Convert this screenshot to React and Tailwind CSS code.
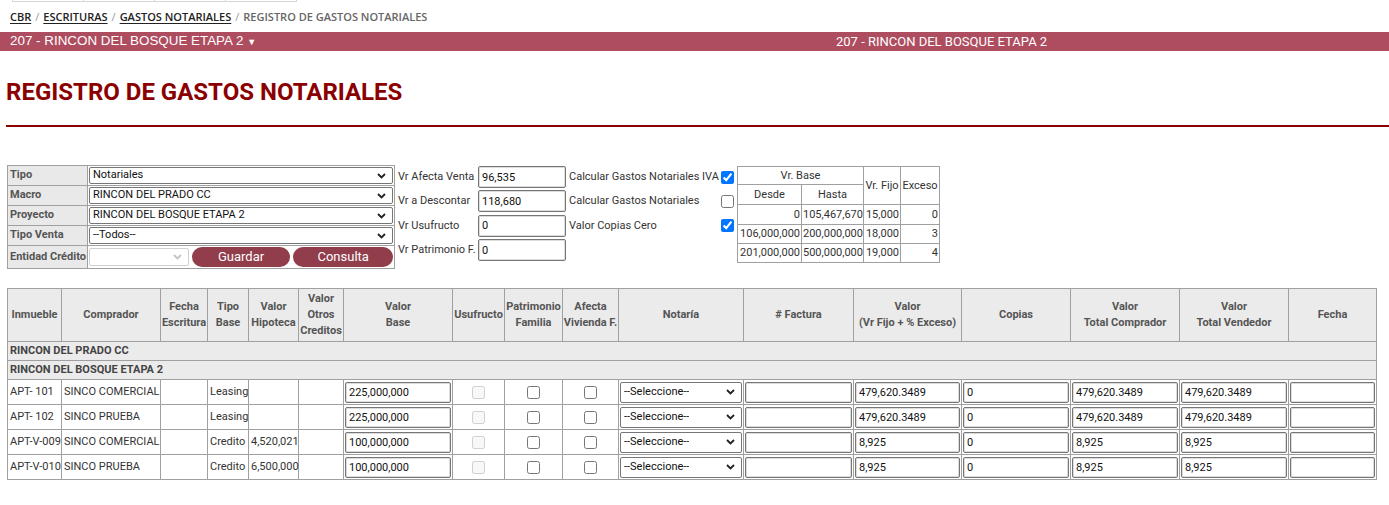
import React from "react";

const Chevron = ({ light }) => (
  <svg width="9" height="6" viewBox="0 0 9 6" className={light ? "text-[#c4c4c4]" : "text-[#222]"}>
    <path d="M1 1l3.5 3.5L8 1" fill="none" stroke="currentColor" strokeWidth="1.8" />
  </svg>
);

const Sel = ({ value, className = "", disabled }) => (
  <div
    className={
      "flex items-center justify-between rounded-[2px] border bg-white pl-[3px] pr-[6px] text-[11px] " +
      (disabled ? "border-[#d0d0d0] " : "border-[#767676] text-[#111] ") +
      className
    }
  >
    <span className="truncate">{value}</span>
    <Chevron light={disabled} />
  </div>
);

const Inp = ({ value, className = "" }) => (
  <input
    defaultValue={value}
    className={
      "rounded-[2px] border border-[#767676] bg-white px-[3px] text-[11px] text-[#111] shadow-[inset_0_0_0_1px_#dcdcdc] outline-none " +
      className
    }
  />
);

const Cb = ({ checked, disabled }) => (
  <input type="checkbox" defaultChecked={checked} disabled={disabled} className="m-0 h-[13px] w-[13px]" />
);

const formRows = [
  ["Tipo", "Notariales"],
  ["Macro", "RINCON DEL PRADO CC"],
  ["Proyecto", "RINCON DEL BOSQUE ETAPA 2"],
  ["Tipo Venta", "--Todos--"],
];

const widths = [54, 99, 47, 41, 50, 45, 109, 52, 58, 56, 125, 110, 108, 109, 109, 109, 88];

const rows = [
  { inm: "APT- 101", comp: "SINCO COMERCIAL", tipo: "Leasing", hip: "", base: "225,000,000", valor: "479,620.3489", tc: "479,620.3489", tv: "479,620.3489" },
  { inm: "APT- 102", comp: "SINCO PRUEBA", tipo: "Leasing", hip: "", base: "225,000,000", valor: "479,620.3489", tc: "479,620.3489", tv: "479,620.3489" },
  { inm: "APT-V-009", comp: "SINCO COMERCIAL", tipo: "Credito", hip: "4,520,021", base: "100,000,000", valor: "8,925", tc: "8,925", tv: "8,925" },
  { inm: "APT-V-010", comp: "SINCO PRUEBA", tipo: "Credito", hip: "6,500,000", base: "100,000,000", valor: "8,925", tc: "8,925", tv: "8,925" },
];

const th = "border border-[#a0a0a0] bg-[#ebebeb] p-0 text-center align-middle font-bold leading-[16px] text-[#555]";
const td = "border border-[#a0a0a0] px-[2px] py-0 align-middle text-[#333]";
const tdi = "border border-[#a0a0a0] px-[1px] py-0 align-middle";
const rt = "border border-[#a0a0a0] px-[1px] py-0 text-right leading-[14px] text-[#333]";
const rh = "border border-[#a0a0a0] px-[1px] py-0 text-center font-normal leading-[14px] text-[#333]";

export default function App() {
  return (
    <div className="h-[505px] w-[1389px] overflow-hidden bg-white font-['Roboto',sans-serif] text-[11px] text-[#333]">
      {/* faint top strip */}
      <div className="flex h-[3px] pl-[12px]">
        {[0, 1, 2, 3].map((i) => (
          <div key={i} className="h-[2px] w-[71px] border-b border-l border-[#d6d6d6]" />
        ))}
        <div className="h-[2px] w-px bg-[#d6d6d6]" />
      </div>

      {/* breadcrumb */}
      <div className="flex h-[29px] items-center pl-[10px] font-['Open_Sans',sans-serif] text-[11px]">
        <span className="font-semibold text-[#222] underline underline-offset-2">CBR</span>
        <span className="px-[4px] text-[#999]">/</span>
        <span className="font-semibold text-[#222] underline underline-offset-2">ESCRITURAS</span>
        <span className="px-[4px] text-[#999]">/</span>
        <span className="font-semibold text-[#222] underline underline-offset-2">GASTOS NOTARIALES</span>
        <span className="px-[4px] text-[#999]">/</span>
        <span className="font-semibold text-[#666]">REGISTRO DE GASTOS NOTARIALES</span>
      </div>

      {/* project bar */}
      <div className="flex h-[19px] items-center bg-[#ae4d60] text-white">
        <div className="w-[836px] pl-[10px] font-['Liberation_Sans',sans-serif] text-[13.4px]">
          207 - RINCON DEL BOSQUE ETAPA 2 <span className="text-[9px]">▼</span>
        </div>
        <div className="text-[13px]">207 - RINCON DEL BOSQUE ETAPA 2</div>
      </div>

      {/* title */}
      <h1 className="mt-[27px] pl-[6px] text-[24px] font-bold leading-[28px] text-[#8b0000]">
        REGISTRO DE GASTOS NOTARIALES
      </h1>
      <div className="ml-[6px] mt-[19px] h-[2px] bg-[#8b0000]" />

      {/* filters */}
      <div className="mt-[38px] flex h-[103px] items-start pl-[7px]">
        <table className="w-[388px] table-fixed border-collapse border border-[#a0a0a0]">
          <colgroup>
            <col className="w-[80px]" />
            <col />
          </colgroup>
          <tbody>
            {formRows.map(([l, v]) => (
              <tr key={l} className="h-[20px]">
                <td className="border border-[#a0a0a0] bg-[#e9e9e9] px-[2px] py-0 font-bold text-[#555]">{l}</td>
                <td className="border border-[#a0a0a0] px-[1px] py-0">
                  <Sel value={v} className="h-[17px]" />
                </td>
              </tr>
            ))}
            <tr className="h-[23px]">
              <td className="whitespace-nowrap border border-[#a0a0a0] bg-[#e9e9e9] px-[2px] py-0 font-bold text-[#555]">
                Entidad Crédito
              </td>
              <td className="border border-[#a0a0a0] px-[1px] py-0">
                <div className="flex items-center gap-[3px]">
                  <Sel value="" disabled className="h-[18px] w-[100px]" />
                  <button className="h-[20px] w-[99px] rounded-[10px] bg-[#923d4b] text-[13px] text-white">Guardar</button>
                  <button className="h-[20px] w-[100px] rounded-[10px] bg-[#923d4b] text-[13px] text-white">Consulta</button>
                </div>
              </td>
            </tr>
          </tbody>
        </table>

        <div className="ml-[3px] mt-[1px] grid grid-cols-[80px_91px_152px_16px] grid-rows-[22px_22px_22px_22px] gap-y-[2.4px] whitespace-nowrap text-[11px] text-[#333]">
          <div className="flex items-center">Vr Afecta Venta</div>
          <div><Inp value="96,535" className="h-[22px] w-[88px]" /></div>
          <div className="flex items-center">Calcular Gastos Notariales IVA</div>
          <div className="flex items-center"><Cb checked /></div>

          <div className="flex items-center">Vr a Descontar</div>
          <div><Inp value="118,680" className="h-[22px] w-[88px]" /></div>
          <div className="flex items-center">Calcular Gastos Notariales</div>
          <div className="flex items-center"><Cb /></div>

          <div className="flex items-center">Vr Usufructo</div>
          <div><Inp value="0" className="h-[22px] w-[88px]" /></div>
          <div className="flex items-center">Valor Copias Cero</div>
          <div className="flex items-center"><Cb checked /></div>

          <div className="flex items-center">Vr Patrimonio F.</div>
          <div><Inp value="0" className="h-[22px] w-[88px]" /></div>
          <div />
          <div />
        </div>

        <table className="mt-[1px] w-[202px] table-fixed border-collapse border border-[#a0a0a0] text-[11px]">
          <colgroup>
            <col className="w-[64px]" />
            <col className="w-[62px]" />
            <col className="w-[37px]" />
            <col className="w-[39px]" />
          </colgroup>
          <thead>
            <tr className="h-[18px]">
              <th colSpan={2} className={rh}>Vr. Base</th>
              <th rowSpan={2} className={rh + " whitespace-nowrap"}>Vr. Fijo</th>
              <th rowSpan={2} className={rh}>Exceso</th>
            </tr>
            <tr className="h-[20px]">
              <th className={rh}>Desde</th>
              <th className={rh}>Hasta</th>
            </tr>
          </thead>
          <tbody>
            {[
              ["0", "105,467,670", "15,000", "0"],
              ["106,000,000", "200,000,000", "18,000", "3"],
              ["201,000,000", "500,000,000", "19,000", "4"],
            ].map((r, i) => (
              <tr key={i} className={i === 0 ? "h-[20px]" : "h-[19px]"}>
                {r.map((c, j) => (
                  <td key={j} className={rt + (j === 2 ? " text-left" : "")}>{c}</td>
                ))}
              </tr>
            ))}
          </tbody>
        </table>
      </div>

      {/* main table */}
      <table className="ml-[7px] mt-[20px] w-[1369px] table-fixed border-collapse border border-[#a0a0a0] text-[11px]">
        <colgroup>
          {widths.map((w, i) => (
            <col key={i} style={{ width: w }} />
          ))}
        </colgroup>
        <thead>
          <tr className="h-[53px]">
            <th className={th}>Inmueble</th>
            <th className={th}>Comprador</th>
            <th className={th}>Fecha<br />Escritura</th>
            <th className={th}>Tipo<br />Base</th>
            <th className={th}>Valor<br />Hipoteca</th>
            <th className={th}>Valor<br />Otros<br />Creditos</th>
            <th className={th}>Valor<br />Base</th>
            <th className={th}>Usufructo</th>
            <th className={th}>Patrimonio<br />Familia</th>
            <th className={th}>Afecta<br />Vivienda F.</th>
            <th className={th}>Notaría</th>
            <th className={th}># Factura</th>
            <th className={th}>Valor<br />(Vr Fijo + % Exceso)</th>
            <th className={th}>Copias</th>
            <th className={th}>Valor<br />Total Comprador</th>
            <th className={th}>Valor<br />Total Vendedor</th>
            <th className={th}>Fecha</th>
          </tr>
        </thead>
        <tbody>
          {["RINCON DEL PRADO CC", "RINCON DEL BOSQUE ETAPA 2"].map((g) => (
            <tr key={g} className="h-[19px]">
              <td colSpan={17} className="border border-[#a0a0a0] bg-[#ebebeb] px-[2px] py-0 font-bold text-[#444]">
                {g}
              </td>
            </tr>
          ))}
          {rows.map((r) => (
            <tr key={r.inm} className="h-[25px]">
              <td className={td + " whitespace-nowrap"}>{r.inm}</td>
              <td className={td + " whitespace-nowrap"}>{r.comp}</td>
              <td className={td}></td>
              <td className={td}>{r.tipo}</td>
              <td className={td}>{r.hip}</td>
              <td className={td}></td>
              <td className={tdi}><Inp value={r.base} className="h-[21px] w-full" /></td>
              <td className={td + " text-center"}><div className="flex justify-center"><Cb disabled /></div></td>
              <td className={td + " text-center"}><div className="flex justify-center"><Cb /></div></td>
              <td className={td + " text-center"}><div className="flex justify-center"><Cb /></div></td>
              <td className={tdi}><Sel value="--Seleccione--" className="h-[21px] w-full" /></td>
              <td className={tdi}><Inp value="" className="h-[21px] w-full" /></td>
              <td className={tdi}><Inp value={r.valor} className="h-[21px] w-full" /></td>
              <td className={tdi}><Inp value="0" className="h-[21px] w-full" /></td>
              <td className={tdi}><Inp value={r.tc} className="h-[21px] w-full" /></td>
              <td className={tdi}><Inp value={r.tv} className="h-[21px] w-full" /></td>
              <td className={tdi}><Inp value="" className="h-[21px] w-full" /></td>
            </tr>
          ))}
        </tbody>
      </table>
    </div>
  );
}
